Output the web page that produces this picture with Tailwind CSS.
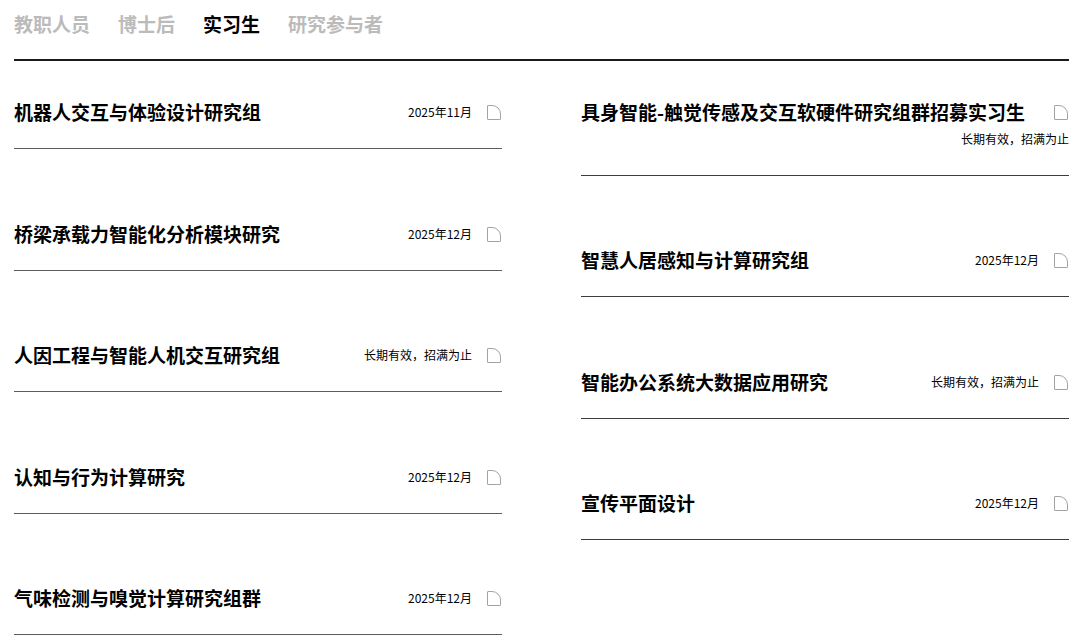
<!DOCTYPE html>
<html lang="zh-CN">
<head>
<meta charset="utf-8">
<meta name="viewport" content="width=device-width, initial-scale=1">
<title>实习生</title>
<script src="https://cdn.jsdelivr.net/npm/@tailwindcss/browser@4"></script>
</head>
<body class="bg-white text-black font-['Noto_Sans_CJK_SC',sans-serif]">
<svg class="hidden" aria-hidden="true"><symbol id="page" viewBox="0 0 14 15"><path d="M.5 14V1Q.5.5 1 .5H5A8.5 8.500 0 0 1 13.500 9V14Q13.500 14.500 13 14.500H1Q.5 14.500 .5 14Z" fill="none" stroke="#a3a3a3"/></symbol></svg>
<main class="pl-3.5 pr-[11px]">
<nav class="flex gap-7 border-b-2 border-[#1a1a1a] pt-[10px] pb-[21px] text-[19px] leading-7 font-bold text-[#bbb]">
<a href="#">教职人员</a>
<a href="#">博士后</a>
<a href="#" class="text-black" aria-current="page">实习生</a>
<a href="#">研究参与者</a>
</nav>
<div class="grid grid-cols-2 items-start gap-x-[79px] pt-[37px]">
<ul>
<li class="mb-[71px] border-b border-[#5c5c5c] pb-[22px]"><a href="#" class="flex items-center pr-px"><h2 class="flex-1 text-[19px] leading-7 font-bold">机器人交互与体验设计研究组</h2><span class="text-xs">2025年11月</span><svg class="ml-[15px] h-[15px] w-[14px]"><use href="#page"/></svg></a></li>
<li class="mb-[70px] border-b border-[#5c5c5c] pb-[22px]"><a href="#" class="flex items-center pr-px"><h2 class="flex-1 text-[19px] leading-7 font-bold">桥梁承载力智能化分析模块研究</h2><span class="text-xs">2025年12月</span><svg class="ml-[15px] h-[15px] w-[14px]"><use href="#page"/></svg></a></li>
<li class="mb-[71px] border-b border-[#5c5c5c] pb-[22px]"><a href="#" class="flex items-center pr-px"><h2 class="flex-1 text-[19px] leading-7 font-bold">人因工程与智能人机交互研究组</h2><span class="text-xs">长期有效，招满为止</span><svg class="ml-[15px] h-[15px] w-[14px]"><use href="#page"/></svg></a></li>
<li class="mb-[70px] border-b border-[#5c5c5c] pb-[22px]"><a href="#" class="flex items-center pr-px"><h2 class="flex-1 text-[19px] leading-7 font-bold">认知与行为计算研究</h2><span class="text-xs">2025年12月</span><svg class="ml-[15px] h-[15px] w-[14px]"><use href="#page"/></svg></a></li>
<li class="border-b border-[#5c5c5c] pb-[22px]"><a href="#" class="flex items-center pr-px"><h2 class="flex-1 text-[19px] leading-7 font-bold">气味检测与嗅觉计算研究组群</h2><span class="text-xs">2025年12月</span><svg class="ml-[15px] h-[15px] w-[14px]"><use href="#page"/></svg></a></li>
</ul>
<ul>
<li class="mb-[70px] border-b border-[#3c3c3c] pb-6"><a href="#" class="block"><span class="flex items-center pr-px"><h2 class="flex-1 text-[19px] leading-7 font-bold">具身智能-触觉传感及交互软硬件研究组群招募实习生</h2><svg class="ml-[15px] h-[15px] w-[14px]"><use href="#page"/></svg></span><span class="block text-right text-xs leading-[25px]">长期有效，招满为止</span></a></li>
<li class="mb-[71px] border-b border-[#3c3c3c] pb-[22px]"><a href="#" class="flex items-center pr-px"><h2 class="flex-1 text-[19px] leading-7 font-bold">智慧人居感知与计算研究组</h2><span class="text-xs">2025年12月</span><svg class="ml-[15px] h-[15px] w-[14px]"><use href="#page"/></svg></a></li>
<li class="mb-[70px] border-b border-[#3c3c3c] pb-[22px]"><a href="#" class="flex items-center pr-px"><h2 class="flex-1 text-[19px] leading-7 font-bold">智能办公系统大数据应用研究</h2><span class="text-xs">长期有效，招满为止</span><svg class="ml-[15px] h-[15px] w-[14px]"><use href="#page"/></svg></a></li>
<li class="border-b border-[#3c3c3c] pb-[22px]"><a href="#" class="flex items-center pr-px"><h2 class="flex-1 text-[19px] leading-7 font-bold">宣传平面设计</h2><span class="text-xs">2025年12月</span><svg class="ml-[15px] h-[15px] w-[14px]"><use href="#page"/></svg></a></li>
</ul>
</div>
</main>
</body>
</html>
